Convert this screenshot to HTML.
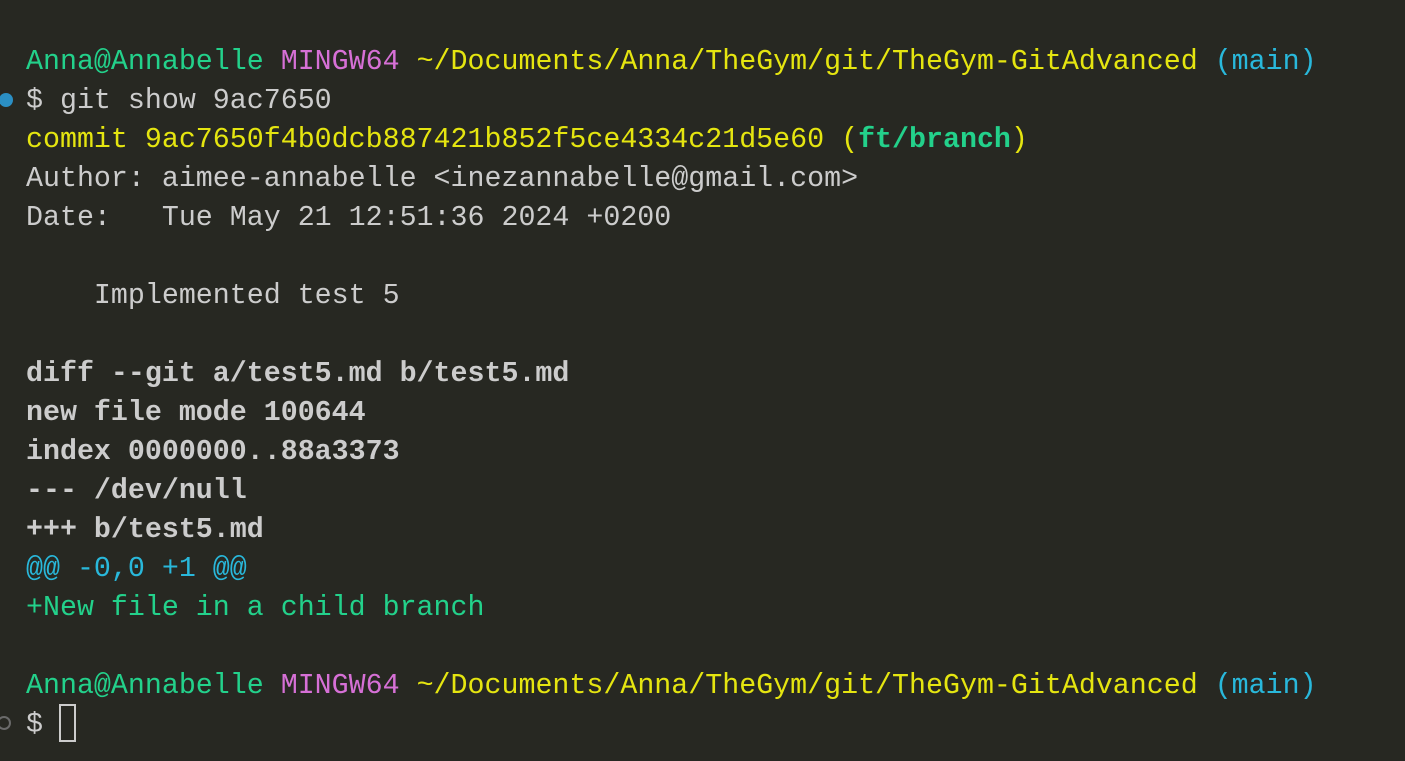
<!DOCTYPE html>
<html><head><meta charset="utf-8"><style>
html,body{margin:0;padding:0;background:#272822;width:1405px;height:761px;overflow:hidden}
.l{position:absolute;left:26px;height:39px;line-height:39px;white-space:pre;font-family:"Liberation Mono",monospace;font-size:28.3px;color:#cccccc}
.g{color:#23d18b}.m{color:#d670d6}.y{color:#e5e510}.c{color:#29b8db}.b{font-weight:bold}
.dot{position:absolute;left:-1px;top:93px;width:14px;height:14px;border-radius:50%;background:#2b8fc4}
.odot{position:absolute;left:-3px;top:716px;width:10px;height:10px;border-radius:50%;border:2px solid #6a6a6a}
.cur{position:absolute;left:59px;top:704px;width:13px;height:34px;border:2px solid #cccccc}
</style></head><body>
<div class="dot"></div><div class="odot"></div><div class="cur"></div>
<div class="l" style="top:43px"><span class="g">Anna@Annabelle</span> <span class="m">MINGW64</span> <span class="y">~/Documents/Anna/TheGym/git/TheGym-GitAdvanced</span> <span class="c">(main)</span></div>
<div class="l" style="top:82px">$ git show 9ac7650</div>
<div class="l y" style="top:121px">commit 9ac7650f4b0dcb887421b852f5ce4334c21d5e60 (<span class="g b">ft/branch</span>)</div>
<div class="l" style="top:160px">Author: aimee-annabelle &lt;inezannabelle@gmail.com&gt;</div>
<div class="l" style="top:199px">Date:   Tue May 21 12:51:36 2024 +0200</div>
<div class="l" style="top:277px">    Implemented test 5</div>
<div class="l b" style="top:355px">diff --git a/test5.md b/test5.md</div>
<div class="l b" style="top:394px">new file mode 100644</div>
<div class="l b" style="top:433px">index 0000000..88a3373</div>
<div class="l b" style="top:472px">--- /dev/null</div>
<div class="l b" style="top:511px">+++ b/test5.md</div>
<div class="l c" style="top:550px">@@ -0,0 +1 @@</div>
<div class="l g" style="top:589px">+New file in a child branch</div>
<div class="l" style="top:667px"><span class="g">Anna@Annabelle</span> <span class="m">MINGW64</span> <span class="y">~/Documents/Anna/TheGym/git/TheGym-GitAdvanced</span> <span class="c">(main)</span></div>
<div class="l" style="top:706px">$</div>
</body></html>
